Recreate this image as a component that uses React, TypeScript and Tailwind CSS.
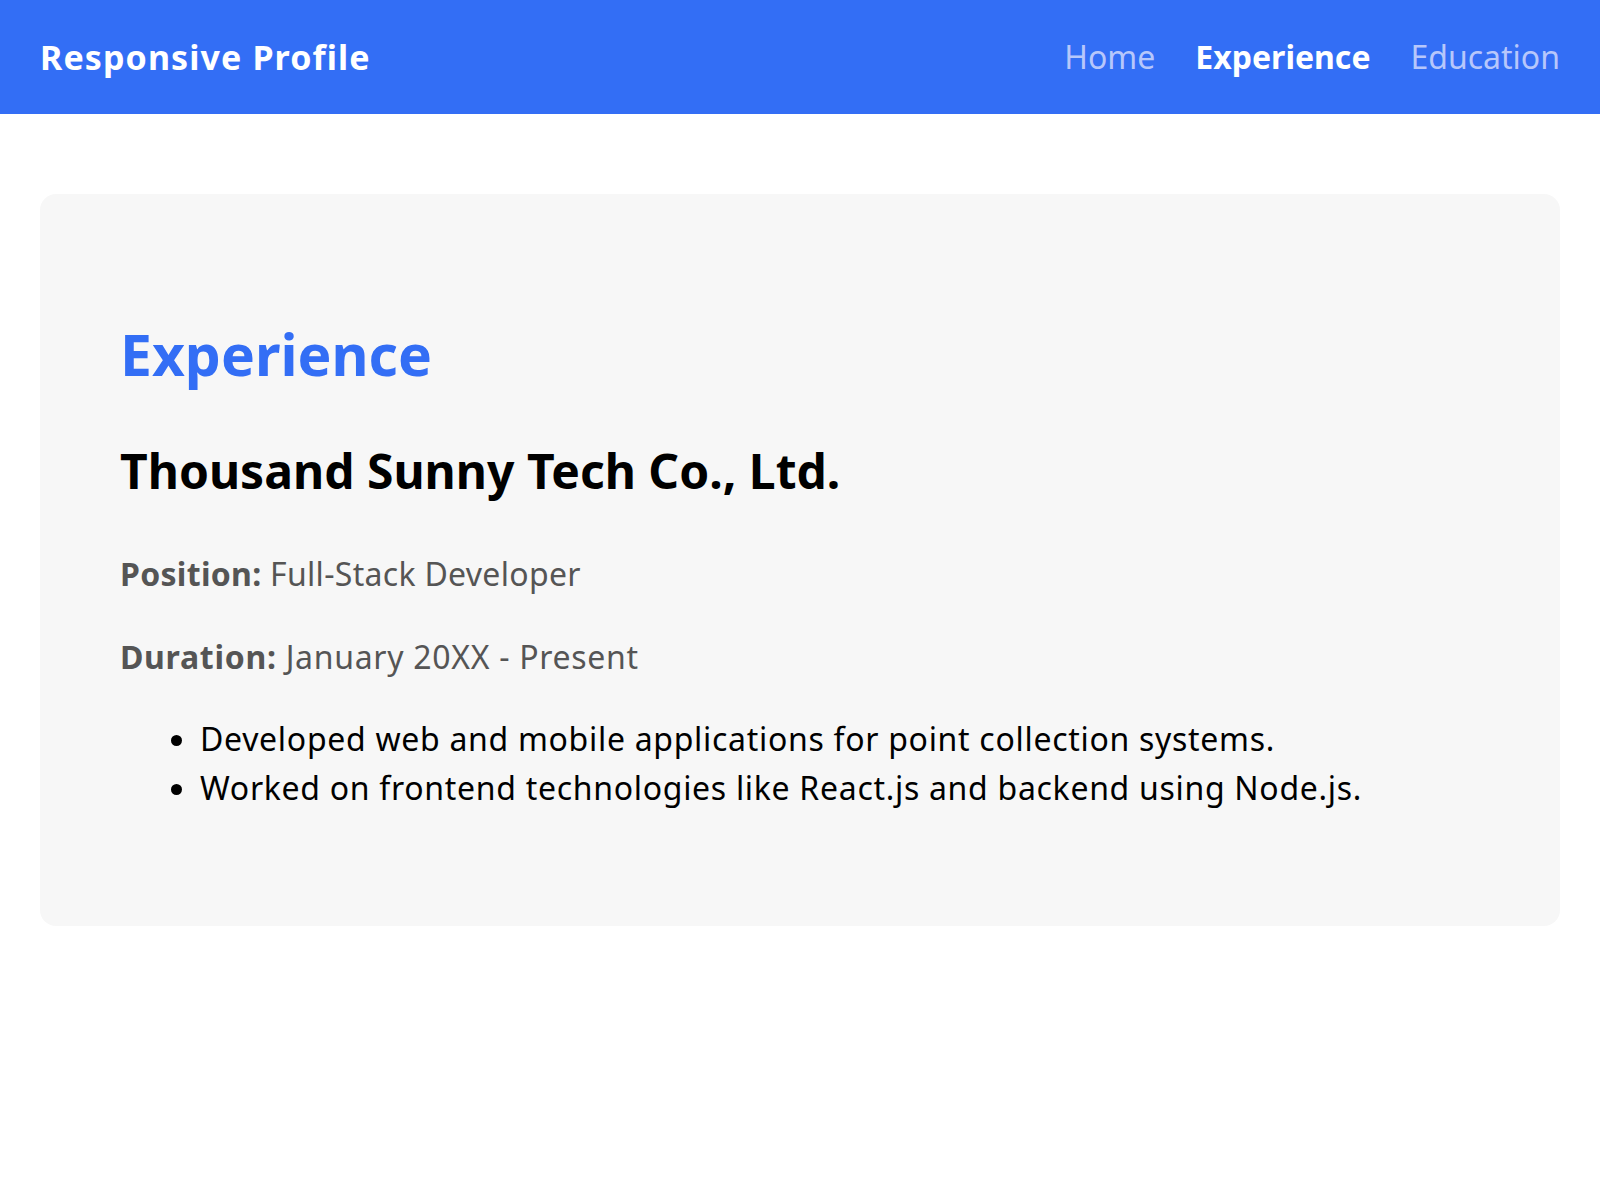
export default function App() {
  const font = { fontFamily: '"Noto Sans", "Open Sans", sans-serif' }
  return (
    <div className="min-h-screen bg-white" style={font}>
      <header className="flex h-[114px] items-center justify-between bg-[#336ef5] px-10">
        <h1 className="text-[34px] font-bold tracking-[1.1px] text-white">Responsive Profile</h1>
        <nav className="flex items-center gap-10 text-[32px]">
          <a className="text-[#b7c7fb]">Home</a>
          <a className="font-bold text-white">Experience</a>
          <a className="text-[#b7c7fb]">Education</a>
        </nav>
      </header>

      <main className="px-10 pt-20">
        <section className="rounded-2xl bg-[#f7f7f7] px-20 pt-[126px] pb-[114px]">
          <h2 className="text-[57px] font-bold leading-[1.2] text-[#336ef5]">Experience</h2>
          <h3 className="mt-[54px] text-[48px] font-bold leading-[1.2] text-black">
            Thousand Sunny Tech Co., Ltd.
          </h3>
          <p className="mt-[50px] text-[32px] leading-[1.5] tracking-[0.3px] text-[#555]">
            <span className="font-bold">Position:</span> Full-Stack Developer
          </p>
          <p className="mt-[35px] text-[32px] leading-[1.5] tracking-[0.7px] text-[#555]">
            <span className="font-bold">Duration:</span> January 20XX - Present
          </p>
          <ul className="mt-[33px] list-disc pl-[80px] text-[32px] leading-[49px] tracking-[0.7px] text-black">
            <li>Developed web and mobile applications for point collection systems.</li>
            <li>Worked on frontend technologies like React.js and backend using Node.js.</li>
          </ul>
        </section>
      </main>
    </div>
  )
}
